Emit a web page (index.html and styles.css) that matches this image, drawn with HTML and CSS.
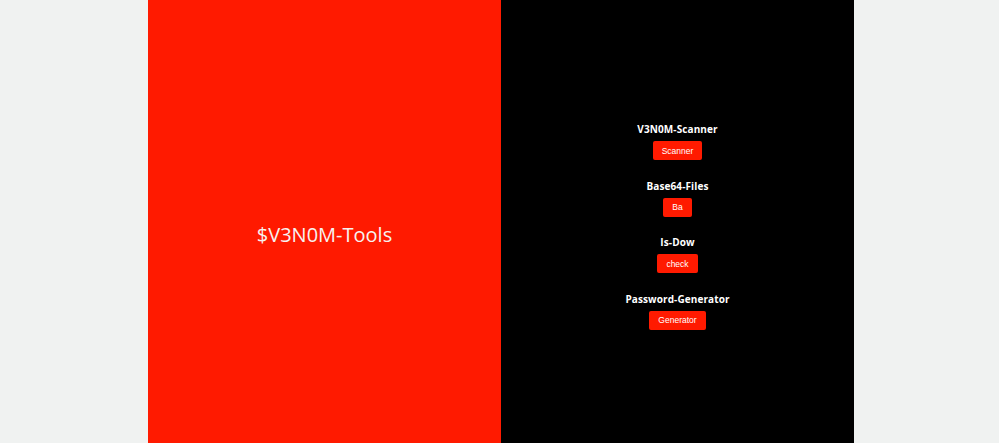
FILE: index.html
```html
<!DOCTYPE html>
<html>
<head>
<meta charset="utf-8">
<link rel="stylesheet" href="styles.css">
</head>
<body>
<div class="page">
  <section class="left">
    <h1 class="title">$V3N0M-Tools</h1>
  </section>
  <section class="right">
    <div class="tool">
      <h3 class="tool-name">V3N0M-Scanner</h3>
      <button class="btn">Scanner</button>
    </div>
    <div class="tool">
      <h3 class="tool-name">Base64-Files</h3>
      <button class="btn">Ba</button>
    </div>
    <div class="tool">
      <h3 class="tool-name">Is-Dow</h3>
      <button class="btn">check</button>
    </div>
    <div class="tool">
      <h3 class="tool-name">Password-Generator</h3>
      <button class="btn">Generator</button>
    </div>
  </section>
</div>
</body>
</html>
```
FILE: styles.css
```css
html, body {
  margin: 0;
  padding: 0;
  background: #f0f2f1;
  height: 100%;
}
body {
  padding-left: 3px;
  box-sizing: border-box;
}
.page {
  width: 706px;
  height: 443px;
  margin: 0 auto;
  display: flex;
  font-family: "Open Sans", "Liberation Sans", sans-serif;
}
.left {
  flex: 1;
  background: #ff1a00;
  display: flex;
  align-items: center;
  justify-content: center;
  padding-top: 25px;
  box-sizing: border-box;
}
.title {
  margin: 0;
  font-weight: 400;
  font-size: 20px;
  color: #f7f2f0;
  letter-spacing: 0;
}
.right {
  flex: 1;
  background: #000;
  display: flex;
  flex-direction: column;
  align-items: center;
  justify-content: center;
  gap: 18.5px;
  padding-top: 9px;
  box-sizing: border-box;
}
.tool {
  display: flex;
  flex-direction: column;
  align-items: center;
  gap: 5px;
}
.tool-name {
  margin: 0;
  font-size: 10px;
  line-height: 14px;
  font-weight: 700;
  color: #fff;
  letter-spacing: 0.1px;
}
.btn {
  font-family: "Liberation Sans", Arial, sans-serif;
  font-size: 8.5px;
  height: 19px;
  padding: 0 9px;
  border: none;
  border-radius: 2px;
  background: #ff1a00;
  color: #fff;
}
```
